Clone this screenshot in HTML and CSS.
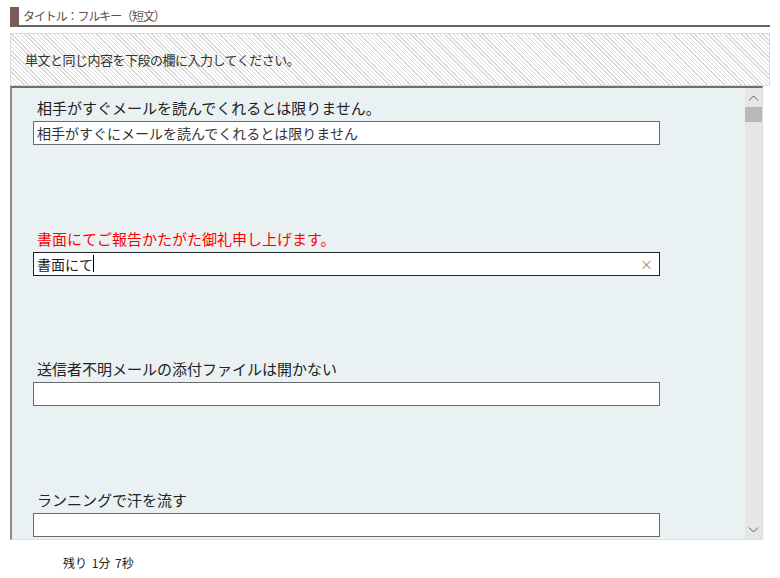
FILE: index.html
```html
<!DOCTYPE html>
<html lang="ja">
<head>
    <meta charset="UTF-8">
    <meta name="viewport" content="width=device-width, initial-scale=1.0">
    <title>フルキー（短文）</title>
    <link rel="stylesheet" href="styles.css">
</head>
<body>
    <div class="page">
        <div class="title">タイトル：フルキー（短文）</div>
        <div class="note">単文と同じ内容を下段の欄に入力してください。</div>

        <div class="panel">
            <div class="list">
                <div class="item">
                    <div class="label">相手がすぐメールを読んでくれるとは限りません。</div>
                    <input class="field" type="text" value="相手がすぐにメールを読んでくれるとは限りません">
                </div>
                <div class="item">
                    <div class="label wrong">書面にてご報告かたがた御礼申し上げます。</div>
                    <div class="field active">
                        <span>書面にて</span><span class="caret"></span>
                        <span class="clear">×</span>
                    </div>
                </div>
                <div class="item">
                    <div class="label">送信者不明メールの添付ファイルは開かない</div>
                    <input class="field" type="text" value="">
                </div>
                <div class="item">
                    <div class="label">ランニングで汗を流す</div>
                    <input class="field" type="text" value="">
                </div>
            </div>
            <div class="scrollbar">
                <div class="arrow up">
                    <svg width="11" height="6" viewBox="0 0 11 6"><path d="M1 5.5 L5.5 1 L10 5.5" fill="none" stroke="#606060" stroke-width="1"/></svg>
                </div>
                <div class="thumb"></div>
                <div class="track"></div>
                <div class="arrow down">
                    <svg width="11" height="6" viewBox="0 0 11 6"><path d="M1 0.5 L5.5 5 L10 0.5" fill="none" stroke="#606060" stroke-width="1"/></svg>
                </div>
            </div>
        </div>

        <div class="timer">残り 1分 7秒</div>
    </div>
</body>
</html>
```

FILE: styles.css
```css
body {
    margin: 0;
    padding: 0;
    font-family: "Noto Sans CJK JP", "Noto Sans", sans-serif;
    color: #333;
    background: #fff;
}

.page {
    padding: 7px 0 0 10px;
    width: 760px;
}

.title {
    height: 18px;
    line-height: 18px;
    border-left: 9px solid #785c55;
    border-bottom: 2px solid #6e625e;
    padding-left: 4px;
    font-size: 12px;
    letter-spacing: -1.1px;
    color: #5e504c;
}

.note {
    margin-top: 6px;
    height: 51px;
    line-height: 51px;
    border: 1px solid #dcdcdc;
    padding-left: 14px;
    font-size: 13px;
    letter-spacing: -0.5px;
    color: #333;
    background: repeating-linear-gradient(45deg, #d9d9d9 0, #d9d9d9 1px, #fff 1px, #fff 3px);
}

.panel {
    display: flex;
    width: 750px;
    height: 451px;
    border-top: 2px solid #6e6e6e;
    border-left: 2px solid #8a8a8a;
    border-right: 1px dotted #c4c4c4;
    border-bottom: 1px dotted #d0d0d0;
    background: #e9f1f3;
}

.list {
    flex: 1;
    overflow: hidden;
    padding: 9px 0 0 21px;
}

.item {
    margin-bottom: 82.7px;
}

.label {
    height: 24px;
    line-height: 22px;
    padding-left: 4px;
    font-size: 15px;
    color: #222;
}

.label.wrong {
    color: #ff0000;
}

.field {
    display: block;
    box-sizing: border-box;
    width: 627px;
    height: 24px;
    margin: 0;
    padding: 0 3px;
    border: 1px solid #6a6a6a;
    background: #fff;
    font-family: inherit;
    font-size: 14px;
    color: #333;
    outline: none;
}

.field.active {
    display: flex;
    align-items: center;
    border-color: #222;
    color: #222;
}

.caret {
    width: 1px;
    height: 17px;
    background: #000;
}

.clear {
    margin-left: auto;
    margin-right: 3px;
    font-size: 13px;
    color: #b07a4a;
}

.scrollbar {
    width: 17px;
    display: flex;
    flex-direction: column;
    background: #e6e6e6;
}

.arrow {
    height: 19px;
    display: flex;
    align-items: center;
    justify-content: center;
}

.thumb {
    height: 15px;
    background: #b8b8b8;
}

.track {
    flex: 1;
}

.timer {
    padding: 14px 0 0 53px;
    font-size: 12px;
    word-spacing: 2px;
    color: #222;
}
```
